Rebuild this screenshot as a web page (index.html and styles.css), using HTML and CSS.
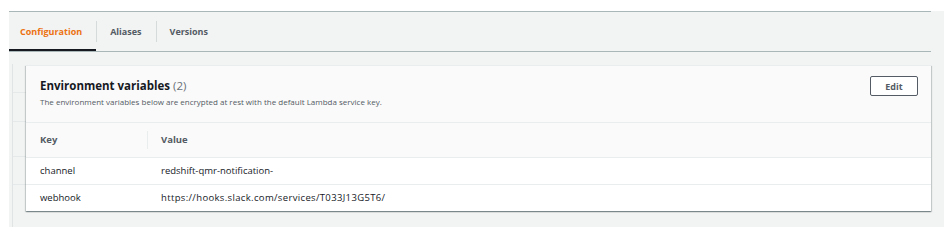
FILE: index.html
```html
<!DOCTYPE html>
<html>
<head>
<meta charset="utf-8">
<link rel="stylesheet" href="styles.css">
</head>
<body>
<div class="page">
  <div class="tabs">
    <div class="tab active">Configuration</div>
    <div class="tab">Aliases</div>
    <div class="tab">Versions</div>
  </div>
  <div class="content">
    <div class="strip"></div>
    <div class="card">
      <div class="card-header">
        <div class="heading">
          <h2 class="title">Environment variables <span class="count">(2)</span></h2>
          <p class="desc">The environment variables below are encrypted at rest with the default Lambda service key.</p>
        </div>
        <button class="btn">Edit</button>
      </div>
      <table class="vars">
        <thead>
          <tr><th class="col-key">Key</th><th class="col-val"><span class="sep"></span>Value</th></tr>
        </thead>
        <tbody>
          <tr><td>channel</td><td>redshift-qmr-notification-</td></tr>
          <tr><td>webhook</td><td class="url">https://hooks.slack.com/services/T033J13G5T6/</td></tr>
        </tbody>
      </table>
    </div>
  </div>
</div>
</body>
</html>
```

FILE: styles.css
```css
* { box-sizing: border-box; }
html, body { margin: 0; padding: 0; background: #ffffff; }
body {
  font-family: "Open Sans", "Noto Sans", Arial, sans-serif;
  color: #16191f;
}
.page {
  margin: 11px 6px 0 9px;
  height: 216px;
  background: #f2f3f3;
  padding-right: 13px;
}
.tabs {
  display: flex;
  height: 41px;
  border-top: 1px solid #aab7b8;
  border-bottom: 1px solid #aab7b8;
}
.tab {
  position: relative;
  display: flex;
  align-items: center;
  padding: 0 14px 0 14px;
  font-size: 9px;
  font-weight: 700;
  color: #545b64;
}
.tab:first-child { padding-left: 11px; }
.tab + .tab::before {
  content: "";
  position: absolute;
  left: 0;
  top: 9px;
  height: 21px;
  width: 1px;
  background: #d5dbdb;
}
.tab.active {
  color: #ec7211;
  box-shadow: inset 0 -2px 0 #16191f;
}
.content {
  display: flex;
  align-items: flex-start;
  padding-top: 13px;
}
.strip {
  flex: none;
  margin-top: -1px;
  height: 163px;
  border-left: 1px solid #e1e4e4;
  margin-left: 3px;
  width: 14px;
  background:
    linear-gradient(#e6e9e9, #e6e9e9) 0 28px / 100% 1px no-repeat,
    linear-gradient(#e6e9e9, #e6e9e9) 0 57px / 100% 1px no-repeat,
    linear-gradient(#e6e9e9, #e6e9e9) 0 92px / 100% 1px no-repeat,
    linear-gradient(#e6e9e9, #e6e9e9) 0 120px / 100% 1px no-repeat;
}
.card {
  flex: 1;
  background: #ffffff;
  box-shadow: 0 1px 1px 0 rgba(0,28,36,.3), 1px 1px 1px 0 rgba(0,28,36,.15), -1px 1px 1px 0 rgba(0,28,36,.15);
  border-top: 1px solid #eaeded;
}
.card-header {
  display: flex;
  justify-content: space-between;
  align-items: flex-start;
  height: 57px;
  background: #fafafa;
  border-bottom: 1px solid #eaeded;
  padding: 0 13px 0 14px;
}
.title {
  margin: 12px 0 0 0;
  font-size: 11.5px;
  line-height: 16px;
  font-weight: 700;
  color: #16191f;
}
.count {
  font-weight: 400;
  color: #687078;
}
.desc {
  margin: 3px 0 0 0;
  font-size: 8px;
  line-height: 10px;
  color: #545b64;
}
.btn {
  margin-top: 10px;
  width: 48px;
  height: 20px;
  border: 1px solid #545b64;
  border-radius: 2px;
  background: #ffffff;
  font-family: inherit;
  font-size: 9px;
  font-weight: 700;
  color: #545b64;
  padding: 0;
}
.vars {
  width: 100%;
  border-collapse: collapse;
}
.vars th, .vars td {
  text-align: left;
  padding: 0 14px;
  font-size: 9.5px;
}
.vars th {
  height: 34px;
  background: #fafafa;
  font-weight: 700;
  color: #545b64;
  border-bottom: 1px solid #eaeded;
}
.col-key { width: 121px; }
.col-val { position: relative; }
.sep {
  position: absolute;
  left: 0;
  top: 8px;
  height: 18px;
  width: 1px;
  background: #eaeded;
}
.vars td {
  height: 27px;
  color: #16191f;
}
.vars td.url { letter-spacing: 0.35px; }
.vars tbody tr + tr td { border-top: 1px solid #eaeded; }
```
